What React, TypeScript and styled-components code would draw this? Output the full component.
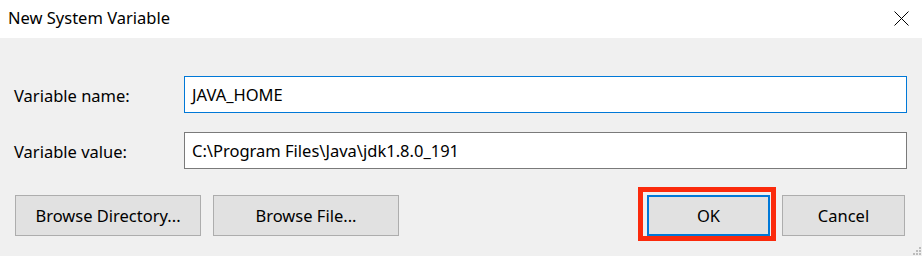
import styled, { createGlobalStyle } from 'styled-components'

const GlobalStyle = createGlobalStyle`
  html, body {
    margin: 0;
    padding: 0;
    background: #f0f0f0;
  }
  body {
    font-family: 'Noto Sans', 'Open Sans', sans-serif;
    color: #000;
  }
`

const Window = styled.div`
  position: relative;
  width: 922px;
  height: 256px;
  display: flex;
  flex-direction: column;
  background: #f0f0f0;
  overflow: hidden;
`

const TitleBar = styled.div`
  height: 38px;
  flex: 0 0 38px;
  background: #fff;
  display: flex;
  align-items: center;
  justify-content: space-between;
  padding: 0 13px 2px 8px;
  box-sizing: border-box;
`

const Title = styled.span`
  font-size: 16.5px;
  line-height: 1;
`

const CloseButton = styled.button`
  width: 15px;
  height: 15px;
  padding: 0;
  border: 0;
  background: none;
  display: flex;
  margin-top: 1px;
`

const Body = styled.div`
  flex: 1;
  padding: 38px 15px 0 14px;
  display: flex;
  flex-direction: column;
`

const FieldRow = styled.div`
  display: grid;
  grid-template-columns: 170px 1fr;
  align-items: center;
  height: 37px;
  margin-bottom: 19px;
`

const Label = styled.label`
  font-size: 16.5px;
  padding-top: 2px;
`

const TextBox = styled.div<{ $focused?: boolean }>`
  height: 37px;
  box-sizing: border-box;
  background: #fff;
  border: 1px solid ${(p) => (p.$focused ? '#0078d7' : '#7a7a7a')};
  display: flex;
  align-items: center;
  padding: 0 7px 1px;
  font-size: 16.5px;
  white-space: nowrap;
`

const ButtonRow = styled.div`
  display: flex;
  gap: 12px;
  margin: 7px 2px 0 1px;
`

const Spacer = styled.div`
  flex: 1;
`

const Button = styled.button<{ $wide?: boolean; $default?: boolean }>`
  width: ${(p) => (p.$wide ? 186 : 123)}px;
  height: 41px;
  box-sizing: border-box;
  background: #e1e1e1;
  border: ${(p) => (p.$default ? '2px solid #0078d7' : '1px solid #adadad')};
  font-family: inherit;
  font-size: 16.5px;
  color: #000;
  padding: 0 0 1px;
  margin: 0;
`

const Marked = styled.div`
  position: relative;
  display: flex;
`

const Highlight = styled.div`
  position: absolute;
  top: -8px;
  left: -9px;
  right: -6px;
  bottom: -5px;
  border: 5px solid #fb2a0c;
  pointer-events: none;
`

const Grip = styled.svg`
  position: absolute;
  right: 0;
  bottom: 0;
`

export default function App() {
  return (
    <>
      <GlobalStyle />
      <Window>
        <TitleBar>
          <Title>New System Variable</Title>
          <CloseButton aria-label="Close">
            <svg width="15" height="15" viewBox="0 0 15 15">
              <path d="M0.5 0.5 L14.5 14.5 M14.5 0.5 L0.5 14.5" stroke="#000" strokeWidth="1" fill="none" />
            </svg>
          </CloseButton>
        </TitleBar>
        <Body>
          <FieldRow>
            <Label>Variable name:</Label>
            <TextBox $focused>JAVA_HOME</TextBox>
          </FieldRow>
          <FieldRow>
            <Label>Variable value:</Label>
            <TextBox>C:\Program Files\Java\jdk1.8.0_191</TextBox>
          </FieldRow>
          <ButtonRow>
            <Button $wide>Browse Directory...</Button>
            <Button $wide>Browse File...</Button>
            <Spacer />
            <Marked>
              <Button $default>OK</Button>
              <Highlight />
            </Marked>
            <Button>Cancel</Button>
          </ButtonRow>
        </Body>
        <Grip width="10" height="10" viewBox="0 0 10 10">
          <rect x="7" y="1" width="2" height="2" fill="#bcbcbc" />
          <rect x="4" y="4" width="2" height="2" fill="#bcbcbc" />
          <rect x="7" y="4" width="2" height="2" fill="#bcbcbc" />
          <rect x="1" y="7" width="2" height="2" fill="#bcbcbc" />
          <rect x="4" y="7" width="2" height="2" fill="#bcbcbc" />
          <rect x="7" y="7" width="2" height="2" fill="#bcbcbc" />
        </Grip>
      </Window>
    </>
  )
}
